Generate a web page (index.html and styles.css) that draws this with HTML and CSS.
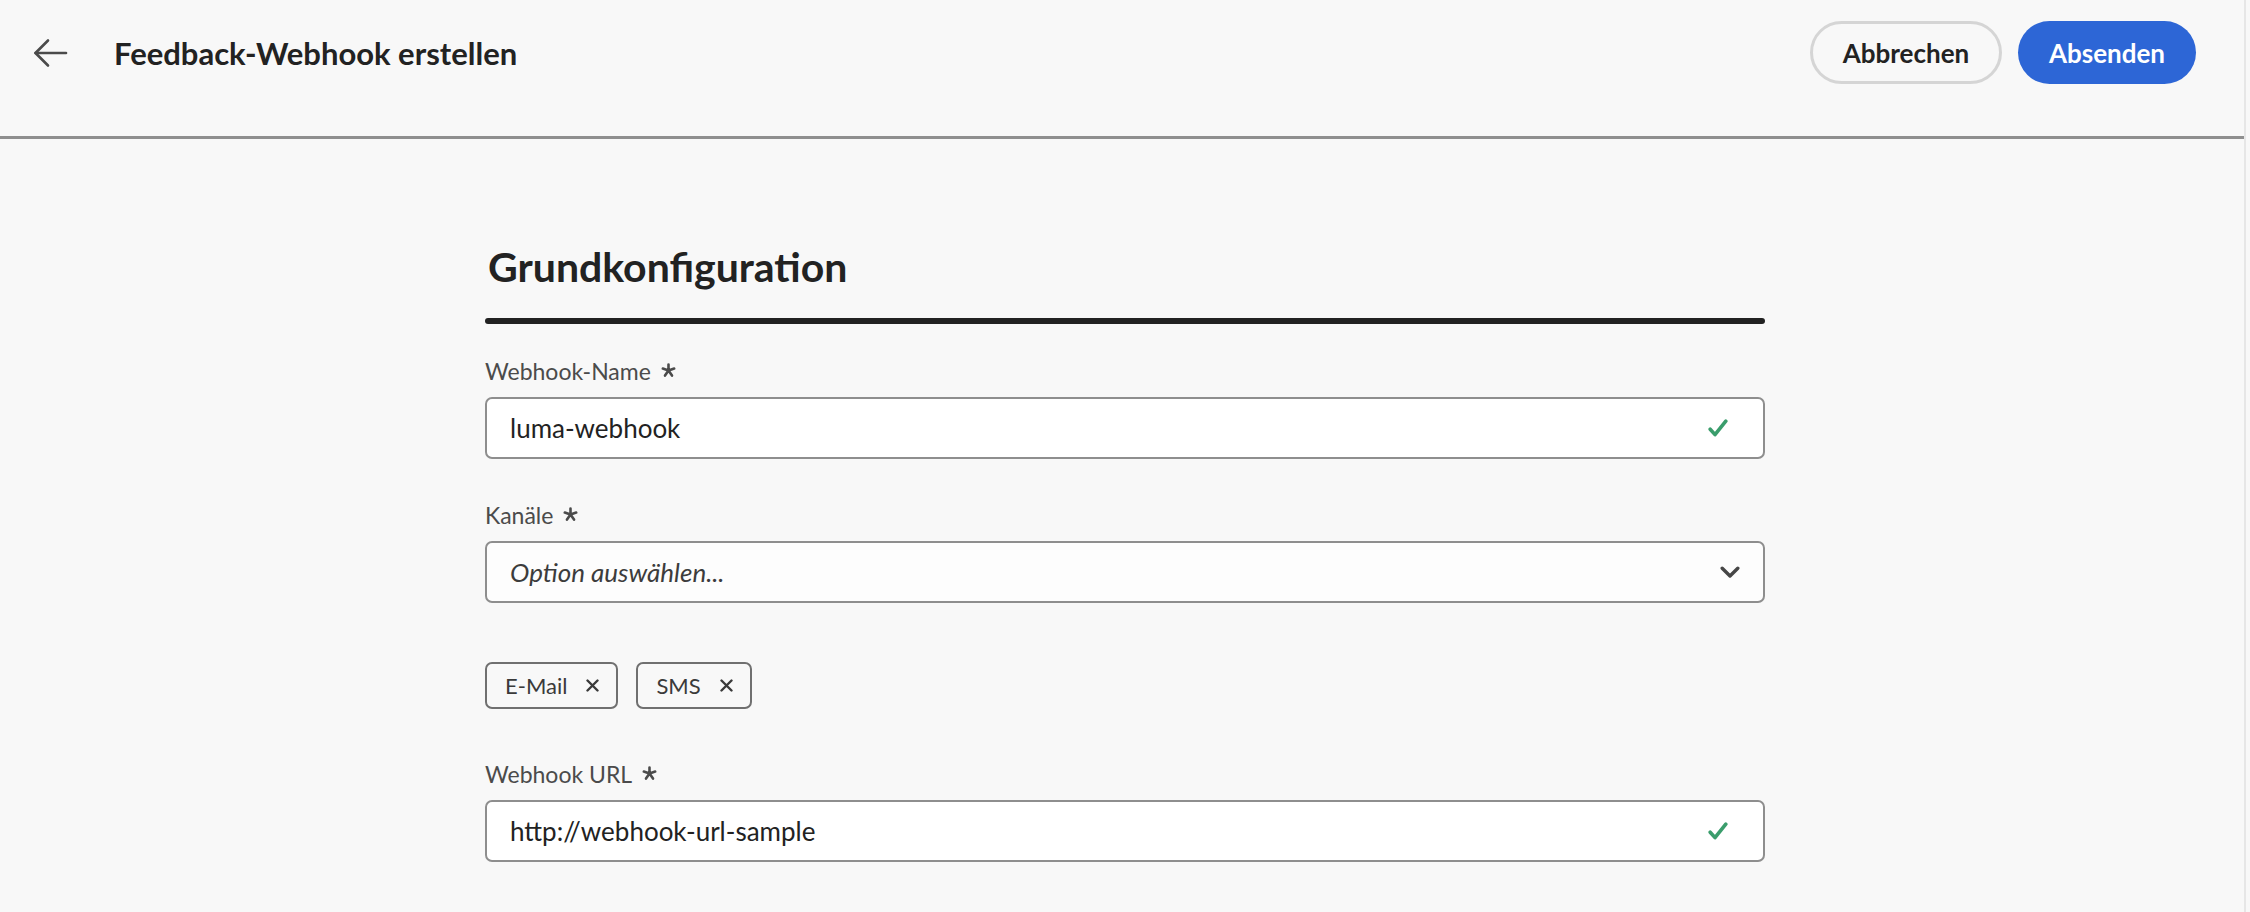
FILE: index.html
```html
<!DOCTYPE html>
<html lang="de">
<head>
<meta charset="utf-8">
<title>Feedback-Webhook erstellen</title>
<link rel="stylesheet" href="styles.css">
</head>
<body>
<div class="app">
  <header class="header">
    <div class="header-left">
      <button class="back" aria-label="Zurück">
        <svg width="35" height="30" viewBox="0 0 35 30" fill="none" stroke="#4b4b4b" stroke-width="2.6" stroke-linecap="round" stroke-linejoin="round">
          <path d="M2.5 15 H33"/>
          <path d="M15 2.5 L2.5 15 L15 27.5"/>
        </svg>
      </button>
      <h1 class="title">Feedback-Webhook erstellen</h1>
    </div>
    <div class="actions">
      <button class="btn btn-secondary">Abbrechen</button>
      <button class="btn btn-primary">Absenden</button>
    </div>
  </header>
  <main class="main">
    <section class="form">
      <h2 class="section-title">Grundkonfiguration</h2>
      <div class="rule"></div>

      <div class="field">
        <label class="label">Webhook-Name <svg class="req" width="15" height="15" viewBox="0 0 15 15" stroke="#4b4b4b" stroke-width="2.6" stroke-linecap="round"><path d="M7.5 1.5 V7.5 M7.5 7.5 L1.8 5.6 M7.5 7.5 L13.2 5.6 M7.5 7.5 L4 12.6 M7.5 7.5 L11 12.6"/></svg></label>
        <div class="input">
          <span class="value">luma-webhook</span>
          <svg class="check" width="20" height="18" viewBox="0 0 20 18" fill="none" stroke="#3a9d6c" stroke-width="3.6" stroke-linecap="round" stroke-linejoin="round"><path d="M2.2 10.2 L7 15.6 L17.8 2.2"/></svg>
        </div>
      </div>

      <div class="field">
        <label class="label">Kanäle <svg class="req" width="15" height="15" viewBox="0 0 15 15" stroke="#4b4b4b" stroke-width="2.6" stroke-linecap="round"><path d="M7.5 1.5 V7.5 M7.5 7.5 L1.8 5.6 M7.5 7.5 L13.2 5.6 M7.5 7.5 L4 12.6 M7.5 7.5 L11 12.6"/></svg></label>
        <div class="input select">
          <span class="placeholder">Option auswählen...</span>
          <svg class="chevron" width="20" height="13" viewBox="0 0 20 13" fill="none" stroke="#464646" stroke-width="3.4" stroke-linecap="round" stroke-linejoin="round"><path d="M2.2 2.2 L10 10 L17.8 2.2"/></svg>
        </div>
      </div>

      <div class="tags">
        <span class="tag">E-Mail <svg class="x" width="13" height="13" viewBox="0 0 13 13" stroke="#3a3a3a" stroke-width="2.4" stroke-linecap="round"><path d="M1.5 1.5 L11.5 11.5 M11.5 1.5 L1.5 11.5"/></svg></span>
        <span class="tag">SMS <svg class="x" width="13" height="13" viewBox="0 0 13 13" stroke="#3a3a3a" stroke-width="2.4" stroke-linecap="round"><path d="M1.5 1.5 L11.5 11.5 M11.5 1.5 L1.5 11.5"/></svg></span>
      </div>

      <div class="field">
        <label class="label">Webhook URL <svg class="req" width="15" height="15" viewBox="0 0 15 15" stroke="#4b4b4b" stroke-width="2.6" stroke-linecap="round"><path d="M7.5 1.5 V7.5 M7.5 7.5 L1.8 5.6 M7.5 7.5 L13.2 5.6 M7.5 7.5 L4 12.6 M7.5 7.5 L11 12.6"/></svg></label>
        <div class="input">
          <span class="value">http://webhook-url-sample</span>
          <svg class="check" width="20" height="18" viewBox="0 0 20 18" fill="none" stroke="#3a9d6c" stroke-width="3.6" stroke-linecap="round" stroke-linejoin="round"><path d="M2.2 10.2 L7 15.6 L17.8 2.2"/></svg>
        </div>
      </div>
    </section>
  </main>
</div>
</body>
</html>
```
FILE: styles.css
```css
* { box-sizing: border-box; }
html, body { margin: 0; padding: 0; }
body {
  background: #f8f8f8;
  font-family: Lato, "Open Sans", sans-serif;
  color: #222222;
}
.app {
  width: 2246px;
  min-height: 912px;
  border-right: 2px solid #e6e6e6;
}
.header {
  height: 139px;
  border-bottom: 3px solid #8f8f8f;
  display: flex;
  justify-content: space-between;
  align-items: flex-start;
  padding: 21px 48px 0 33px;
}
.header-left {
  display: flex;
  align-items: center;
  height: 63px;
}
.back {
  background: none;
  border: 0;
  padding: 0;
  margin: 0;
  width: 35px;
  height: 30px;
  display: flex;
}
.title {
  margin: 0 0 0 46px;
  font-size: 31px;
  font-weight: 700;
  color: #222;
}
.actions {
  display: flex;
  gap: 16px;
}
.btn {
  height: 63px;
  border-radius: 32px;
  font-family: Lato, "Open Sans", sans-serif;
  font-weight: 700;
  font-size: 26px;
  padding: 0;
  display: flex;
  align-items: center;
  justify-content: center;
}
.btn-secondary {
  width: 192px;
  background: transparent;
  border: 3px solid #d5d5d5;
  color: #222;
}
.btn-primary {
  width: 178px;
  background: #2d66d6;
  border: 0;
  color: #fff;
}
.main {
  padding: 103px 0 0 6px;
  display: flex;
  justify-content: center;
}
.form {
  width: 1280px;
  display: flex;
  flex-direction: column;
}
.section-title {
  margin: 0;
  font-size: 41px;
  line-height: 50px;
  font-weight: 700;
  color: #222;
  padding-left: 3px;
}
.rule {
  margin-top: 26px;
  height: 6px;
  border-radius: 3px;
  background: #222;
}
.field {
  display: flex;
  flex-direction: column;
  gap: 13px;
}
.rule + .field { margin-top: 35px; }
.field + .field { margin-top: 44px; }
.label {
  font-size: 23px;
  line-height: 25px;
  color: #4b4b4b;
  display: flex;
  align-items: center;
}
.req {
  margin-left: 10px;
  margin-top: -3px;
  display: block;
}
.input {
  height: 62px;
  border: 2px solid #8e8e8e;
  border-radius: 7px;
  background: #ffffff;
  display: flex;
  align-items: center;
  justify-content: space-between;
  padding: 0 35px 0 23px;
}
.select {
  background: #fdfdfd;
  padding-right: 23px;
}
.value {
  font-size: 26px;
  color: #222;
}
.placeholder {
  font-size: 26px;
  font-style: italic;
  color: #3c3c3c;
}
.tags {
  margin-top: 59px;
  margin-bottom: 53px;
  display: flex;
  gap: 18px;
}
.tag {
  height: 47px;
  border: 2px solid #707070;
  border-radius: 7px;
  display: inline-flex;
  align-items: center;
  gap: 19px;
  padding: 0 17px 0 18px;
  font-size: 22px;
  color: #3a3a3a;
}
.x { display: block; }
```
